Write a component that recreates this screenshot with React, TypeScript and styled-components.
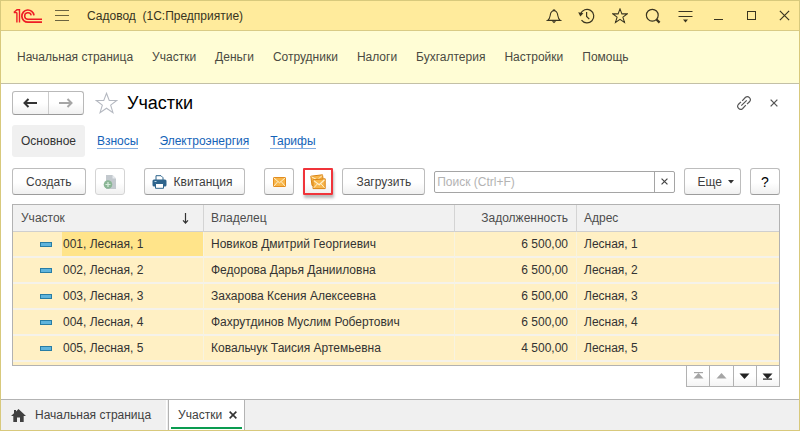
import React, { useState } from "react";
import styled, { createGlobalStyle, css } from "styled-components";

const GlobalStyle = createGlobalStyle`
  *, *::before, *::after { box-sizing: border-box; }
  body { margin: 0; background: #fff; }
  body, button, input { font-family: "Liberation Sans", Arial, sans-serif; font-size: 12px; }
  button { padding: 0; border: 0; background: none; color: inherit; cursor: pointer; }
  svg { display: block; flex: none; }
`;

const Window = styled.div`
  display: flex;
  flex-direction: column;
  min-height: 100vh;
  border: 1px solid #d8c97c;
  background: #fff;
  color: #333;
`;

const TitleBar = styled.header`
  display: flex;
  align-items: center;
  height: 30px;
  padding-left: 12px;
  background: #ffeb9c;
  border-bottom: 1px solid #d9cb85;
`;

const AppTitle = styled.div`
  flex: 1;
  padding-left: 12px;
  white-space: pre;
  color: #37331f;
`;

const BurgerButton = styled.button`
  display: grid;
  place-items: center;
  width: 26px;
  height: 28px;
  margin-left: 6px;
  color: #6b6340;
`;

const TitleButton = styled.button`
  display: grid;
  place-items: center;
  width: 29px;
  height: 28px;
  margin-left: 4px;
  color: #3a3520;
`;

const MenuBar = styled.nav`
  display: flex;
  align-items: center;
  gap: 19px;
  height: 53px;
  padding: 0 16px;
  background: #fffdd5;
  border-bottom: 1px solid #c3c0a6;
`;

const MenuLink = styled.a`
  color: #4a4a42;
  text-decoration: none;
  white-space: nowrap;
`;

const Content = styled.main`
  flex: 1;
  padding: 7px 19px 12px 11px;
`;

const PageHeader = styled.div`
  display: flex;
  align-items: center;
  height: 24px;
`;

const NavGroup = styled.div`
  display: flex;
  width: 72px;
  height: 24px;
  border: 1px solid #b9b9b9;
  border-bottom-color: #999;
  border-radius: 3px;
  background: linear-gradient(#fff 50%, #f1f1f1);
`;

const NavButton = styled.button`
  flex: 1;
  display: grid;
  place-items: center;
  color: #333;
  & + & { border-left: 1px solid #ccc; }
  &:disabled { color: #a6a6a6; cursor: default; }
`;

const FavoriteButton = styled.button`
  margin-left: 11px;
  color: #b4b8c0;
`;

const PageTitle = styled.h1`
  flex: 1;
  margin: 0 0 0 9px;
  font-size: 18px;
  line-height: 24px;
  font-weight: 400;
  color: #000;
`;

const HeaderAction = styled.button`
  display: grid;
  place-items: center;
  width: 30px;
  height: 24px;
  color: #555;
  &:last-child { width: 12px; margin-left: 9px; }
`;

const Sections = styled.nav`
  display: flex;
  align-items: center;
  gap: 21px;
  height: 32px;
  margin-top: 10px;
`;

const SectionLink = styled.a<{ $active?: boolean }>`
  color: #1463b8;
  line-height: 14px;
  text-decoration: none;
  border-bottom: 1px solid #84ade0;
  ${(p) =>
    p.$active &&
    css`
      padding: 0 9px;
      margin-right: -9px;
      border: 0;
      border-radius: 3px;
      background: #f0f0f0;
      color: #333;
      line-height: 32px;
    `}
`;

const Toolbar = styled.div`
  display: flex;
  align-items: center;
  gap: 9px;
  margin-top: 11px;
`;

const ToolGroup = styled.div`
  display: flex;
  gap: 9px;
  margin-right: 10px;
`;

type ToolKind = "icon" | "leading" | "dropdown";

const toolShapes = {
  icon: css`width: 30px; padding: 0;`,
  leading: css`padding: 0 12px 0 7px;`,
  dropdown: css`padding: 0 6px 0 13px; gap: 6px;`,
};

const ToolButton = styled.button<{ $kind?: ToolKind; $marked?: boolean }>`
  display: flex;
  align-items: center;
  justify-content: center;
  gap: 7px;
  height: 27px;
  padding: 0 13px;
  border: 1px solid #bdbdbd;
  border-bottom-color: #9c9c9c;
  border-radius: 3px;
  background: linear-gradient(#fff 55%, #f0f0f0);
  color: #3d3d3d;
  white-space: nowrap;
  ${(p) => p.$kind && toolShapes[p.$kind]}
  ${(p) =>
    p.$marked &&
    css`
      border: 2px solid #f0343a;
      border-radius: 1px;
      box-shadow: 1px 3px 3px #bbb;
    `}
  &:disabled { border-color: #d4d4d4; cursor: default; }
`;

const HelpMark = styled.span`
  font-size: 14px;
  color: #000;
`;

const SearchBox = styled.form`
  flex: 1;
  display: flex;
  min-width: 0;
  height: 22px;
  border: 1px solid #a5a5a5;
  border-radius: 2px;
`;

const SearchInput = styled.input`
  flex: 1;
  min-width: 0;
  padding: 0 2px;
  border: 0;
  outline: 0;
  background: transparent;
  &::placeholder { color: #b3b3b3; opacity: 1; }
`;

const ClearButton = styled.button`
  display: grid;
  place-items: center;
  width: 20px;
  border-left: 1px solid #a5a5a5;
  color: #444;
`;

const TableFrame = styled.div`
  margin-top: 9px;
  padding-bottom: 3px;
  border: 1px solid #b2b2b2;
  background: #fff0c4;
`;

const Table = styled.table`
  width: 100%;
  table-layout: fixed;
  border-collapse: separate;
  border-spacing: 0;
`;

const Column = styled.col<{ $width?: number }>`
  width: ${(p) => (p.$width ? `${p.$width}px` : "auto")};
`;

const HeadCell = styled.th<{ $numeric?: boolean }>`
  height: 27px;
  padding: 0 8px;
  border-bottom: 1px solid #cfcfcf;
  background: #f1f1f1;
  color: #4d4d4d;
  font-weight: 400;
  text-align: ${(p) => (p.$numeric ? "right" : "left")};
  & + & { padding-left: 7px; border-left: 1px solid #d4d4d4; }
`;

const SortLabel = styled.div`
  display: flex;
  align-items: center;
  justify-content: space-between;
  padding-right: 6px;
`;

const Cell = styled.td<{ $numeric?: boolean }>`
  height: 26px;
  padding: 0 8px;
  border-bottom: 2px solid #f5f2ea;
  color: #333;
  white-space: nowrap;
  text-align: ${(p) => (p.$numeric ? "right" : "left")};
  & + & { padding-left: 7px; border-left: 1px solid #f8f3df; }
  &:first-child { padding: 0; }
`;

const PlotCell = styled.div`
  display: flex;
  align-items: center;
  height: 24px;
  padding-left: 27px;
`;

const PlotName = styled.span<{ $selected: boolean }>`
  flex: 1;
  margin-left: 10px;
  padding-left: 1px;
  line-height: 24px;
  background: ${(p) => (p.$selected ? "#ffe48a" : "transparent")};
`;

const Pager = styled.div`
  display: flex;
  width: 94px;
  height: 21px;
  margin-left: auto;
  border: 1px solid #b2b2b2;
  border-top: 0;
`;

const PagerButton = styled.button`
  flex: 1;
  display: grid;
  place-items: center;
  background: linear-gradient(#fff 50%, #f4f4f4);
  color: #222;
  & + & { border-left: 1px solid #b2b2b2; }
  &:disabled { color: #a5a5a5; cursor: default; }
`;

const TaskBar = styled.footer`
  display: flex;
  height: 31px;
  border-top: 1px solid #b3b3b3;
  background: #f0f0f0;
`;

const HomeTab = styled.button`
  display: flex;
  align-items: center;
  gap: 9px;
  padding: 0 15px 0 10px;
  color: #404040;
  border-right: 1px solid #fff;
`;

const OpenTab = styled.div`
  display: flex;
  align-items: center;
  gap: 7px;
  margin-left: 1px;
  padding: 0 7px 0 9px;
  border-left: 1px solid #b3b3b3;
  border-right: 1px solid #b3b3b3;
  background:
    linear-gradient(#0a9c50, #0a9c50) center bottom 1px / calc(100% - 4px) 2px no-repeat,
    #fff;
  color: #404040;
`;

const CloseTab = styled.button`
  color: #333;
`;

const STAR = "M8 .9l1.9 5h5.2l-4.2 3.2 1.6 5.3L8 11.3l-4.5 3.1 1.6-5.3L.9 5.9h5.2z";

const Logo = () => (
  <svg width="30" height="16" viewBox="0 0 30 16" fill="none" stroke="#ee1c25" aria-label="1С">
    <path d="M.8 4.600L4 1.700H6.500V14.600M3.900 4.600V14.600M.8 4.600H3.900" strokeWidth="1.400" />
    <path d="M21 7.300A6.100 6.100 0 1 0 15 14.200H29" strokeWidth="1.700" />
    <path d="M18.200 7.300A3.300 3.300 0 1 0 15 11.300H29" strokeWidth="1.500" />
  </svg>
);

const CrossIcon = ({ size, width = 1.2 }: { size: number; width?: number }) => (
  <svg width={size} height={size} viewBox="0 0 10 10" fill="none" stroke="currentColor" strokeWidth={(width * 10) / size}>
    <path d="M.8 .8L9.2 9.2M9.2 .8L.8 9.2" />
  </svg>
);

const BellIcon = () => (
  <svg width="16" height="16" viewBox="0 0 16 16" fill="none" stroke="currentColor" strokeWidth="1.1">
    <path d="M7 2.7a1 1 0 0 1 2 0M1.7 12.4c2.1-1.3 2.2-3 2.6-5.5C4.7 4.2 6 2.7 8 2.7s3.300 1.500 3.700 4.200c.4 2.500.5 4.200 2.600 5.500z" />
    <path d="M5.800 13.200h4.400L8 15.200z" fill="currentColor" stroke="none" />
  </svg>
);

const HistoryIcon = () => (
  <svg width="17" height="16" viewBox="0 0 17 16" fill="none" stroke="currentColor" strokeWidth="1.200">
    <path d="M2.600 5.800A6.800 6.800 0 1 1 3.500 12.200" />
    <path d="M8.600 4v4.500l2.700 2.700" />
    <path d="M.2 4.200L5.400 5.200L2.300 8.600z" fill="currentColor" stroke="none" />
  </svg>
);

const StarIcon = ({ size }: { size: number }) => (
  <svg width={size} height={size} viewBox="0 0 16 16" fill="none" stroke="currentColor" strokeWidth={17 / size}>
    <path d={STAR} />
  </svg>
);

const SearchIcon = () => (
  <svg width="16" height="16" viewBox="0 0 16 16" fill="none" stroke="currentColor">
    <circle cx="7.300" cy="7.200" r="5.900" strokeWidth="1.200" />
    <path d="M11.500 11.500L14.600 14.600" strokeWidth="2.200" />
  </svg>
);

const OptionsIcon = () => (
  <svg width="15" height="15" viewBox="0 0 15 15" fill="none" stroke="currentColor">
    <path d="M.5 3.500H14.500M.5 8.500H14.500" />
    <path d="M5 11.500H10L7.500 14.500z" fill="currentColor" stroke="none" />
  </svg>
);

const ArrowIcon = ({ right }: { right?: boolean }) => (
  <svg width="14" height="10" viewBox="0 0 14 10" fill="none" stroke="currentColor" strokeWidth="2">
    <path d={right ? "M0 5H12.500M8.500 1L12.500 5L8.500 9" : "M14 5H1.500M5.500 1L1.500 5L5.500 9"} />
  </svg>
);

const LinkIcon = () => (
  <svg width="16" height="16" viewBox="0 0 16 16" fill="none" stroke="currentColor" strokeWidth="1.200">
    <path d="M6.200 5.800L9.500 2.300a3 3 0 0 1 4.200 4.200L11 9.200M9.800 10.200L6.500 13.700a3 3 0 0 1-4.200-4.200L5 6.800M5.300 10.700L10.700 5.300" />
  </svg>
);

const DocumentIcon = () => (
  <svg width="14" height="16" viewBox="0 0 14 16">
    <path d="M3 1h6.500L13 4.500V15H3z" fill="#c3c9ce" />
    <path d="M9.500 1v3.500H13z" fill="#e6eaed" />
    <circle cx="5" cy="10.500" r="4.300" fill="#8ab695" />
    <path d="M5 8v5M2.500 10.500h5" stroke="#d7ebdc" strokeWidth="1.200" />
  </svg>
);

const PrinterIcon = () => (
  <svg width="15" height="14" viewBox="0 0 15 14">
    <path d="M4 5V.7h5l2 2V5" fill="#fff" stroke="#2e648c" />
    <rect x=".5" y="4.500" width="14" height="7" rx="1.500" fill="#2e648c" />
    <path d="M3.500 8.500h8v4.800h-8z" fill="#fff" stroke="#2e648c" />
    <path d="M2.500 6.500h2" stroke="#b9d6e8" />
  </svg>
);

const MailIcon = () => (
  <svg width="13" height="10" viewBox="0 0 13 10">
    <rect x=".5" y=".5" width="12" height="9" rx=".5" fill="#f8b64a" stroke="#e28d20" />
    <path d="M1 1L6.500 5.800L12 1M1 9L4.800 4.600M12 9L8.200 4.600" fill="none" stroke="#fff0cd" />
  </svg>
);

const MailStackIcon = () => (
  <svg width="16" height="16" viewBox="0 0 16 16" strokeLinejoin="round">
    <path d="M.8 2.200L12.500 .8L13.800 10L2 11.500z" fill="#f8b64a" stroke="#d98516" />
    <path d="M1.500 2.800L7.500 6L12 1.500" fill="none" stroke="#fff0cd" />
    <path d="M3 5.800L15.200 4.800V14.600H3z" fill="#f8b64a" stroke="#d98516" />
    <path d="M3.800 6.600L9.200 10.800L14.500 5.700" fill="none" stroke="#fff0cd" strokeWidth="1.200" />
    <path d="M3.800 13.800L7.300 10M14.500 13.800L11 9.800" fill="none" stroke="#fff0cd" />
  </svg>
);

const SortIcon = () => (
  <svg width="7" height="11" viewBox="0 0 7 11" fill="none" stroke="#333" strokeWidth="1.200">
    <path d="M3.500 0V10M1 7.300L3.500 10L6 7.300" />
  </svg>
);

const RowIcon = () => (
  <svg width="12" height="5" viewBox="0 0 12 5">
    <rect x=".5" y=".5" width="11" height="4" fill="#5fb4dc" stroke="#287da5" />
  </svg>
);

const PagerIcon = ({ up, edge }: { up?: boolean; edge?: boolean }) => (
  <svg width="11" height="8" viewBox="0 0 11 8" fill="currentColor">
    <path d={up ? "M.5 6.500L5.500 1L10.500 6.500z" : "M.5 1.500H10.500L5.500 7z"} />
    {edge && <path d={up ? "M1 0H10V1.200H1z" : "M1 6.500H10V7.700H1z"} />}
  </svg>
);

const HomeIcon = () => (
  <svg width="15" height="13" viewBox="0 0 15 13" fill="#404040">
    <path d="M7.500 0L15 7H12.700V13H9V8.500H6V13H2.300V7H0L3 4.200V1H5V2.400z" />
  </svg>
);

const menu = ["Начальная страница", "Участки", "Деньги", "Сотрудники", "Налоги", "Бухгалтерия", "Настройки", "Помощь"];
const sections = ["Основное", "Взносы", "Электроэнергия", "Тарифы"];
const rows = [
  { plot: "001, Лесная, 1", owner: "Новиков Дмитрий Георгиевич", debt: "6 500,00", address: "Лесная, 1" },
  { plot: "002, Лесная, 2", owner: "Федорова Дарья Данииловна", debt: "6 500,00", address: "Лесная, 2" },
  { plot: "003, Лесная, 3", owner: "Захарова Ксения Алексеевна", debt: "6 500,00", address: "Лесная, 3" },
  { plot: "004, Лесная, 4", owner: "Фахрутдинов Муслим Робертович", debt: "6 500,00", address: "Лесная, 4" },
  { plot: "005, Лесная, 5", owner: "Ковальчук Таисия Артемьевна", debt: "4 500,00", address: "Лесная, 5" },
];

export default function App() {
  const [selected, setSelected] = useState(0);
  const [query, setQuery] = useState("");

  return (
    <>
      <GlobalStyle />
      <Window>
        <TitleBar>
          <Logo />
          <BurgerButton aria-label="Меню">
            <svg width="14" height="12" viewBox="0 0 14 12" stroke="currentColor">
              <path d="M0 .5H14M0 5.500H14M0 10.500H14" />
            </svg>
          </BurgerButton>
          <AppTitle>{"Садовод  (1С:Предприятие)"}</AppTitle>
          <TitleButton aria-label="Уведомления"><BellIcon /></TitleButton>
          <TitleButton aria-label="История"><HistoryIcon /></TitleButton>
          <TitleButton aria-label="Избранное"><StarIcon size={16} /></TitleButton>
          <TitleButton aria-label="Поиск"><SearchIcon /></TitleButton>
          <TitleButton aria-label="Параметры"><OptionsIcon /></TitleButton>
          <TitleButton aria-label="Свернуть">
            <svg width="9" height="10" viewBox="0 0 9 10" stroke="currentColor"><path d="M0 8.500H9" /></svg>
          </TitleButton>
          <TitleButton aria-label="Развернуть">
            <svg width="9" height="9" viewBox="0 0 9 9" fill="none" stroke="currentColor"><rect x=".5" y=".5" width="8" height="8" /></svg>
          </TitleButton>
          <TitleButton aria-label="Закрыть"><CrossIcon size={11} /></TitleButton>
        </TitleBar>

        <MenuBar>
          {menu.map((item) => <MenuLink key={item} href="#">{item}</MenuLink>)}
        </MenuBar>

        <Content>
          <PageHeader>
            <NavGroup>
              <NavButton aria-label="Назад"><ArrowIcon /></NavButton>
              <NavButton aria-label="Вперед" disabled><ArrowIcon right /></NavButton>
            </NavGroup>
            <FavoriteButton aria-label="Добавить в избранное"><StarIcon size={23} /></FavoriteButton>
            <PageTitle>Участки</PageTitle>
            <HeaderAction aria-label="Ссылка"><LinkIcon /></HeaderAction>
            <HeaderAction aria-label="Закрыть форму"><CrossIcon size={8} width={1.3} /></HeaderAction>
          </PageHeader>

          <Sections>
            {sections.map((item, i) => <SectionLink key={item} href="#" $active={i === 0}>{item}</SectionLink>)}
          </Sections>

          <Toolbar>
            <ToolGroup>
              <ToolButton>Создать</ToolButton>
              <ToolButton $kind="icon" disabled aria-label="Скопировать"><DocumentIcon /></ToolButton>
            </ToolGroup>
            <ToolGroup>
              <ToolButton $kind="leading"><PrinterIcon />Квитанция</ToolButton>
            </ToolGroup>
            <ToolButton $kind="icon" aria-label="Письмо"><MailIcon /></ToolButton>
            <ToolButton $kind="icon" $marked aria-label="Рассылка писем"><MailStackIcon /></ToolButton>
            <ToolButton>Загрузить</ToolButton>
            <SearchBox onSubmit={(e) => e.preventDefault()}>
              <SearchInput aria-label="Поиск" placeholder="Поиск (Ctrl+F)" value={query} onChange={(e) => setQuery(e.target.value)} />
              <ClearButton type="button" aria-label="Очистить" onClick={() => setQuery("")}><CrossIcon size={7} /></ClearButton>
            </SearchBox>
            <ToolButton $kind="dropdown">
              Еще
              <svg width="6" height="4" viewBox="0 0 6 4" fill="#333"><path d="M0 0H6L3 3.500z" /></svg>
            </ToolButton>
            <ToolButton $kind="icon" aria-label="Справка"><HelpMark>?</HelpMark></ToolButton>
          </Toolbar>

          <TableFrame>
            <Table>
              <colgroup>
                <Column $width={190} />
                <Column $width={251} />
                <Column $width={122} />
                <Column />
              </colgroup>
              <thead>
                <tr>
                  <HeadCell><SortLabel>Участок<SortIcon /></SortLabel></HeadCell>
                  <HeadCell>Владелец</HeadCell>
                  <HeadCell $numeric>Задолженность</HeadCell>
                  <HeadCell>Адрес</HeadCell>
                </tr>
              </thead>
              <tbody>
                {rows.map((row, i) => (
                  <tr key={row.plot} onClick={() => setSelected(i)}>
                    <Cell>
                      <PlotCell>
                        <RowIcon />
                        <PlotName $selected={selected === i}>{row.plot}</PlotName>
                      </PlotCell>
                    </Cell>
                    <Cell>{row.owner}</Cell>
                    <Cell $numeric>{row.debt}</Cell>
                    <Cell>{row.address}</Cell>
                  </tr>
                ))}
              </tbody>
            </Table>
          </TableFrame>
          <Pager>
            <PagerButton disabled aria-label="В начало"><PagerIcon up edge /></PagerButton>
            <PagerButton disabled aria-label="Вверх"><PagerIcon up /></PagerButton>
            <PagerButton aria-label="Вниз"><PagerIcon /></PagerButton>
            <PagerButton aria-label="В конец"><PagerIcon edge /></PagerButton>
          </Pager>
        </Content>

        <TaskBar>
          <HomeTab><HomeIcon />Начальная страница</HomeTab>
          <OpenTab>
            Участки
            <CloseTab aria-label="Закрыть вкладку"><CrossIcon size={8} width={1.6} /></CloseTab>
          </OpenTab>
        </TaskBar>
      </Window>
    </>
  );
}
